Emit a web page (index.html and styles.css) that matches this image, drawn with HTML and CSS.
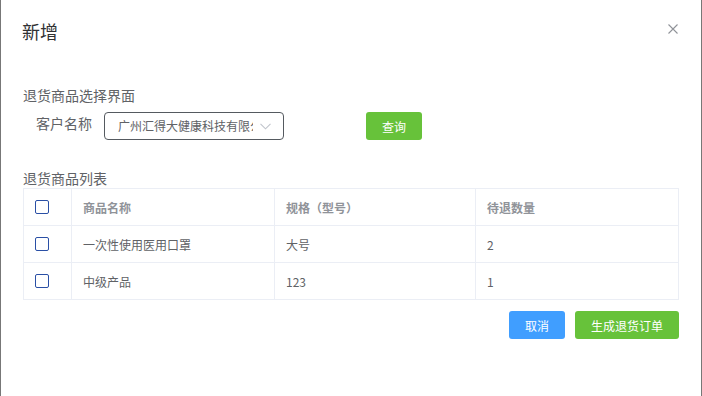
FILE: index.html
```html
<!DOCTYPE html>
<html lang="zh-CN">
<head>
    <meta charset="UTF-8">
    <meta name="viewport" content="width=device-width, initial-scale=1.0">
    <title>新增</title>
    <link rel="stylesheet" href="styles.css">
</head>
<body>
    <div class="dialog">
        <div class="dialog-header">
            <span class="dialog-title">新增</span>
            <button class="dialog-close" type="button">
                <svg width="10" height="10" viewBox="0 0 10 10"><path d="M0.5 0.5 L9.5 9.5 M9.5 0.5 L0.5 9.5" stroke="#909399" stroke-width="1.1" fill="none"/></svg>
            </button>
        </div>
        <div class="dialog-body">
            <div class="section-title">退货商品选择界面</div>
            <div class="form-row">
                <label class="form-label">客户名称</label>
                <div class="select">
                    <span class="select-text">广州汇得大健康科技有限公司</span>
                    <svg class="select-arrow" width="11" height="7" viewBox="0 0 11 7"><path d="M0.5 0.8 L5.5 5.8 L10.5 0.8" stroke="#c0c4cc" stroke-width="1.1" fill="none"/></svg>
                </div>
                <button class="btn btn-green btn-query" type="button">查询</button>
            </div>

            <div class="section-title list-title">退货商品列表</div>
            <table class="goods-table">
                <colgroup>
                    <col style="width: 48px">
                    <col style="width: 203px">
                    <col style="width: 201px">
                    <col>
                </colgroup>
                <thead>
                    <tr>
                        <th><span class="checkbox"></span></th>
                        <th>商品名称</th>
                        <th>规格（型号）</th>
                        <th>待退数量</th>
                    </tr>
                </thead>
                <tbody>
                    <tr>
                        <td><span class="checkbox"></span></td>
                        <td>一次性使用医用口罩</td>
                        <td>大号</td>
                        <td>2</td>
                    </tr>
                    <tr>
                        <td><span class="checkbox"></span></td>
                        <td>中级产品</td>
                        <td>123</td>
                        <td>1</td>
                    </tr>
                </tbody>
            </table>

            <div class="dialog-footer">
                <button class="btn btn-blue" type="button">取消</button>
                <button class="btn btn-green btn-wide" type="button">生成退货订单</button>
            </div>
        </div>
    </div>
</body>
</html>
```

FILE: styles.css
```css
body { margin: 0; padding: 0; font-family: "Noto Sans CJK SC", "Liberation Sans", sans-serif; color: #606266; background: #fff; }
.dialog { box-sizing: border-box; width: 702px; height: 396px; border-left: 1px solid #777; border-right: 1px solid #777; background: #fff; position: relative; }
.dialog-header { padding: 19px 21px 0; height: 26px; }
.dialog-title { font-size: 18px; line-height: 24px; color: #303133; }
.dialog-close { position: absolute; top: 24px; right: 23px; padding: 0; border: none; background: none; width: 10px; height: 10px; line-height: 0; cursor: pointer; }
.dialog-body { padding: 40px 22px 0; }
.section-title { font-size: 14px; line-height: 20px; color: #606266; }
.form-row { display: flex; align-items: flex-start; margin-top: 7px; height: 28px; }
.form-label { box-sizing: border-box; width: 81px; padding-right: 12px; text-align: right; font-size: 14px; line-height: 22px; color: #606266; }
.select { box-sizing: border-box; width: 180px; height: 28px; border: 1px solid #555a60; border-radius: 4px; display: flex; align-items: center; padding-left: 13px; position: relative; }
.select-text { display: block; width: 135px; overflow: hidden; white-space: nowrap; font-size: 12px; line-height: 26px; color: #606266; }
.select-arrow { position: absolute; right: 12px; top: 10px; }
.btn { border: none; border-radius: 3px; height: 28px; padding: 0; color: #fff; font-family: inherit; font-size: 12px; cursor: pointer; }
.btn-green { background: #67c23a; }
.btn-blue { background: #409eff; width: 56px; }
.btn-query { width: 56px; margin-left: 82px; }
.btn-wide { width: 104px; }
.list-title { margin-top: 28px; }
.goods-table { width: 656px; border-collapse: collapse; table-layout: fixed; font-size: 12px; }
.goods-table th, .goods-table td { border: 1px solid #ebeef5; height: 36px; padding: 0 11px; text-align: left; box-sizing: border-box; }
.goods-table th { color: #909399; font-weight: bold; }
.goods-table td { color: #606266; }
.goods-table tr { height: 37px; }
.checkbox { display: block; box-sizing: border-box; width: 14px; height: 14px; border: 1px solid #2a4fa5; border-radius: 2px; }
.dialog-footer { display: flex; justify-content: flex-end; gap: 10px; margin-top: 11px; }
```
